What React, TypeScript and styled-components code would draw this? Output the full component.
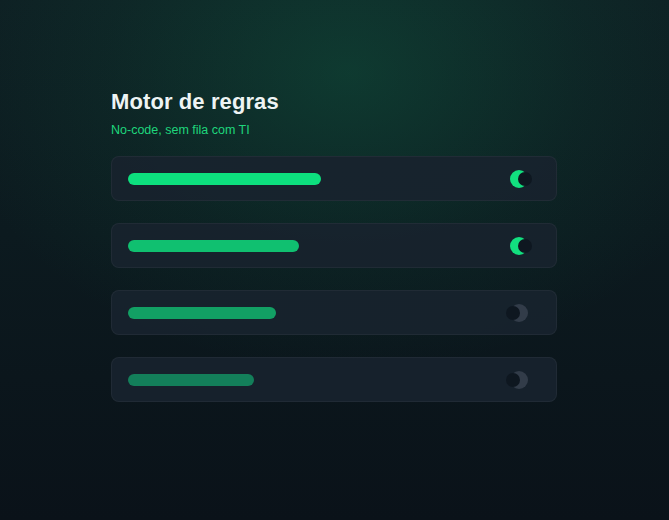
import React from "react";
import styled, { createGlobalStyle } from "styled-components";

const Global = createGlobalStyle`
  html, body { margin: 0; padding: 0; }
  body {
    background: #0a131a;
    font-family: "Liberation Sans", Arial, sans-serif;
  }
`;

const Page = styled.div`
  width: 669px;
  height: 520px;
  box-sizing: border-box;
  padding: 89px 0 0 111px;
  display: flex;
  background:
    radial-gradient(ellipse 400px 300px at 52% 14%, rgba(18, 140, 90, 0.26), rgba(18, 140, 90, 0.08) 60%, rgba(18, 140, 90, 0) 100%),
    linear-gradient(180deg, #0e1f23 0%, #0c1a1f 45%, #0a1219 100%);
`;

const Panel = styled.div`
  width: 446px;
  display: flex;
  flex-direction: column;
`;

const Title = styled.h1`
  margin: 0;
  font-size: 22px;
  line-height: 26px;
  font-weight: 700;
  color: #eef4f4;
  letter-spacing: 0.1px;
`;

const Subtitle = styled.p`
  margin: 7px 0 0;
  font-size: 12.5px;
  line-height: 16px;
  color: #1ed67c;
`;

const List = styled.div`
  margin-top: 18px;
  display: flex;
  flex-direction: column;
  gap: 22px;
`;

const Card = styled.div`
  height: 45px;
  box-sizing: border-box;
  border: 1px solid rgba(255, 255, 255, 0.045);
  border-radius: 8px;
  background: rgba(24, 35, 46, 0.92);
  display: flex;
  align-items: center;
  justify-content: space-between;
  padding: 0 28px 0 16px;
`;

const Bar = styled.div<{ $color: string }>`
  height: 12px;
  border-radius: 6px;
  background: ${(p) => p.$color};
`;

const Track = styled.div<{ $on: boolean }>`
  position: relative;
  width: 18px;
  height: 18px;
  border-radius: 9px;
  background: ${(p) => (p.$on ? "#12e07f" : "#323c49")};
`;

const Knob = styled.div<{ $on: boolean }>`
  position: absolute;
  top: 2px;
  ${(p) => (p.$on ? "left: 8px;" : "left: -4px;")}
  width: 14px;
  height: 14px;
  border-radius: 50%;
  background: #0e1720;
`;

const rules = [
  { w: 193, color: "#0de07e", on: true },
  { w: 171, color: "#10c070", on: true },
  { w: 148, color: "#12a064", on: false },
  { w: 126, color: "#137f5a", on: false },
];

export default function App() {
  return (
    <>
      <Global />
      <Page>
        <Panel>
          <Title>Motor de regras</Title>
          <Subtitle>No-code, sem fila com TI</Subtitle>
          <List>
            {rules.map((r, i) => (
              <Card key={i}>
                <Bar $color={r.color} style={{ width: r.w }} />
                <Track $on={r.on}>
                  <Knob $on={r.on} />
                </Track>
              </Card>
            ))}
          </List>
        </Panel>
      </Page>
    </>
  );
}
